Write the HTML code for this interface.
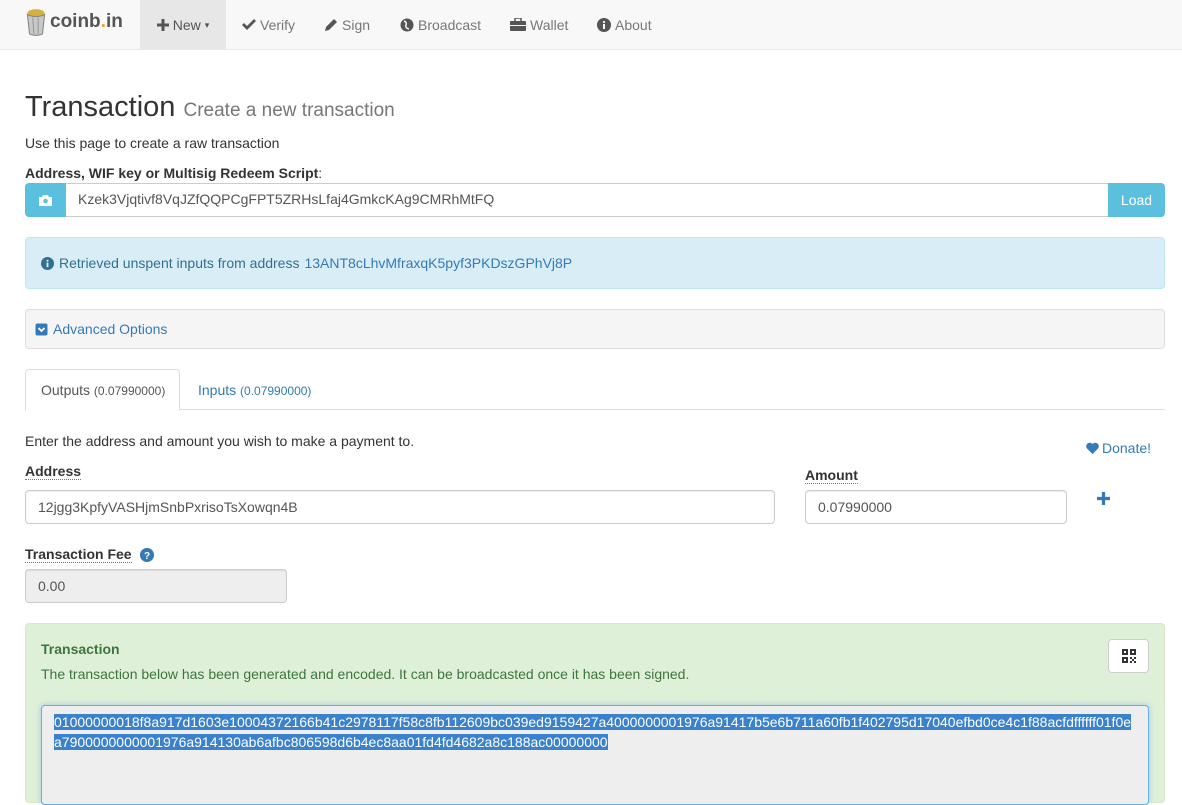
<!DOCTYPE html>
<html><head><meta charset="utf-8">
<style>
*{box-sizing:border-box}
body{margin:0;width:1182px;height:786px;overflow:hidden;font-family:"Liberation Sans",sans-serif;font-size:14px;color:#333;background:#fff}
a{color:#337ab7;text-decoration:none}
.nav{height:50px;background:#f8f8f8;border-bottom:1px solid #e7e7e7;position:relative}
.nav .brand{position:absolute;left:25px;top:8px;font-size:19px;font-weight:bold;color:#555;display:flex;align-items:center}
.nav .item{position:absolute;top:0;height:49px;line-height:48px;color:#777;font-size:14px;display:flex;align-items:center;gap:4px}
.nav .item svg{fill:#555}
.ta{position:absolute;white-space:nowrap}
h1{position:absolute;left:25px;top:91px;margin:0;font-size:29px;font-weight:normal;color:#333;white-space:nowrap}
h1 small{font-size:19px;color:#777}
.lbl{font-weight:bold;position:absolute;white-space:nowrap}
.dot{border-bottom:1px dotted #777}
.inp{position:absolute;height:34px;border:1px solid #ccc;border-radius:4px;padding:6px 12px;font-size:14px;color:#555;line-height:20px;background:#fff;box-shadow:inset 0 1px 1px rgba(0,0,0,.075)}
</style></head><body>
<div class="nav">
 <div class="brand"><svg width="22" height="28" viewBox="0 0 20 26"><ellipse cx="10" cy="5" rx="8" ry="4" fill="#d4b23a"/><path d="M2 6 L4 24 Q10 27 16 24 L18 6 Q10 10 2 6Z" fill="#c8c8c8" stroke="#888"/><path d="M7 9 L8 24 M12 9 L12 24" stroke="#999"/></svg><span style="margin-left:3px">coinb<span style="color:#e3a72f">.</span>in</span></div>
 <div class="item" style="left:140px;width:86px;background:#e7e7e7;color:#555;justify-content:center"><svg width="12" height="12" viewBox="0 0 12 12"><path d="M4.5 0h3v4.5H12v3H7.5V12h-3V7.5H0v-3h4.5z"/></svg>New<span style="font-size:9px">▾</span></div>
 <div class="item" style="left:242px"><svg width="14" height="12" viewBox="0 0 14 12"><path d="M0 6l2-2 3 3 7-7 2 2-9 9z"/></svg>Verify</div>
 <div class="item" style="left:324px"><svg width="14" height="14" viewBox="0 0 14 14"><path d="M10 1l3 3-8 8-4 1 1-4z"/></svg>Sign</div>
 <div class="item" style="left:400px"><svg width="14" height="14" viewBox="0 0 14 14"><circle cx="7" cy="7" r="6.5"/><path d="M4 3q3 1 2 4t3 4" stroke="#f8f8f8" fill="none" stroke-width="1.5"/></svg>Broadcast</div>
 <div class="item" style="left:510px"><svg width="16" height="13" viewBox="0 0 16 13"><rect x="0" y="3" width="16" height="10" rx="1"/><rect x="5" y="0" width="6" height="4" fill="none" stroke="#555" stroke-width="1.5"/><rect x="0" y="7" width="16" height="1" fill="#f8f8f8"/></svg>Wallet</div>
 <div class="item" style="left:597px"><svg width="14" height="14" viewBox="0 0 14 14"><circle cx="7" cy="7" r="7"/><rect x="6" y="6" width="2" height="5" fill="#f8f8f8"/><circle cx="7" cy="4" r="1.1" fill="#f8f8f8"/></svg>About</div>
</div>
<h1>Transaction <small>Create a new transaction</small></h1>
<div class="ta" style="left:25px;top:135px">Use this page to create a raw transaction</div>
<div class="lbl" style="left:25px;top:165px">Address, WIF key or Multisig Redeem Script<span style="font-weight:normal">:</span></div>
<div class="ta" style="left:25px;top:183px;width:1140px;height:34px;display:flex">
 <div style="width:41px;background:#5bc0de;border-radius:4px 0 0 4px;display:flex;align-items:center;justify-content:center"><svg width="13" height="11" viewBox="0 0 13 11"><path d="M0 2h3l1-2h5l1 2h3v9H0z" fill="#fff"/><circle cx="6.5" cy="6" r="2.3" fill="#5bc0de"/></svg></div>
 <div style="flex:1;border:1px solid #ccc;border-left:0;border-right:0;padding:7px 12px;color:#555">Kzek3Vjqtivf8VqJZfQQPCgFPT5ZRHsLfaj4GmkcKAg9CMRhMtFQ</div>
 <div style="width:57px;background:#5bc0de;color:#fff;border-radius:0 4px 4px 0;text-align:center;line-height:34px">Load</div>
</div>
<div class="ta" style="left:25px;top:237px;width:1140px;height:52px;background:#d9edf7;border:1px solid #bce8f1;border-radius:4px;padding:17px 15px;color:#31708f;display:flex;align-items:center;gap:5px"><svg width="13" height="13" viewBox="0 0 14 14"><circle cx="7" cy="7" r="7" fill="#31708f"/><rect x="6" y="6" width="2" height="5" fill="#d9edf7"/><circle cx="7" cy="4" r="1.1" fill="#d9edf7"/></svg>Retrieved unspent inputs from address <a href="#" style="color:#337ab7">13ANT8cLhvMfraxqK5pyf3PKDszGPhVj8P</a></div>
<div class="ta" style="left:25px;top:309px;width:1140px;height:40px;background:#f5f5f5;border:1px solid #ddd;border-radius:4px;padding:10px 9px;display:flex;align-items:center;gap:5px"><svg width="13" height="13" viewBox="0 0 13 13"><rect x="0.5" y="0.5" width="12" height="12" rx="2" fill="#337ab7"/><path d="M3.5 5l3 3 3-3" stroke="#fff" stroke-width="1.8" fill="none"/></svg><a href="#">Advanced Options</a></div>
<div class="ta" style="left:25px;top:409px;width:1140px;border-top:1px solid #ddd"></div>
<div class="ta" style="left:25px;top:369px;width:155px;height:42px;border:1px solid #ddd;border-bottom-color:#fff;border-radius:4px 4px 0 0;background:#fff;padding:12px 0 0 15px;color:#555">Outputs <span style="font-size:12px">(0.07990000)</span></div>
<div class="ta" style="left:198px;top:382px;color:#337ab7">Inputs <span style="font-size:12px">(0.07990000)</span></div>
<div class="ta" style="left:25px;top:433px">Enter the address and amount you wish to make a payment to.</div>
<div class="ta" style="left:1086px;top:440px;color:#337ab7;display:flex;align-items:center;gap:3px"><svg width="13" height="12" viewBox="0 0 13 12"><path d="M6.5 12L1 6.5A3 3 0 0 1 6.5 2 3 3 0 0 1 12 6.5z" fill="#337ab7"/></svg>Donate!</div>
<div class="lbl" style="left:25px;top:463px"><span class="dot">Address</span></div>
<div class="lbl" style="left:805px;top:467px"><span class="dot">Amount</span></div>
<div class="inp" style="left:25px;top:490px;width:750px">12jgg3KpfyVASHjmSnbPxrisoTsXowqn4B</div>
<div class="inp" style="left:805px;top:490px;width:262px">0.07990000</div>
<div class="ta" style="left:1097px;top:492px"><svg width="13" height="13" viewBox="0 0 12 12"><path d="M4.5 0h3v4.5H12v3H7.5V12h-3V7.5H0v-3h4.5z" fill="#337ab7"/></svg></div>
<div class="lbl" style="left:25px;top:546px;display:flex;align-items:center;gap:8px"><span class="dot">Transaction Fee</span><svg width="14" height="14" viewBox="0 0 14 14"><circle cx="7" cy="7" r="7" fill="#337ab7"/><text x="7" y="11" font-size="10" font-weight="bold" text-anchor="middle" fill="#fff" font-family="Liberation Sans">?</text></svg></div>
<div class="inp" style="left:25px;top:569px;width:262px;background:#eee">0.00</div>
<div class="ta" style="left:25px;top:623px;width:1140px;height:180px;background:#dff0d8;border:1px solid #d6e9c6;border-radius:4px;color:#3c763d">
 <div style="position:absolute;left:15px;top:17px;font-weight:bold">Transaction</div>
 <div style="position:absolute;left:15px;top:42px">The transaction below has been generated and encoded. It can be broadcasted once it has been signed.</div>
 <div style="position:absolute;left:1082px;top:15px;width:41px;height:34px;background:#fff;border:1px solid #ccc;border-radius:4px;display:flex;align-items:center;justify-content:center"><svg width="14" height="14" viewBox="0 0 14 14" fill="#333"><path d="M0 0h6v6H0zM2 2v2h2V2zM8 0h6v6H8zM10 2v2h2V2zM0 8h6v6H0zM2 10v2h2v-2zM8 8h2v2H8zM12 8h2v2h-2zM10 10h2v2h-2zM8 12h2v2H8zM12 12h2v2h-2z" fill-rule="evenodd"/></svg></div>
 <div style="position:absolute;left:15px;top:81px;width:1108px;height:100px;background:#eee;border:1px solid #66afe9;border-radius:4px;box-shadow:0 0 6px rgba(102,175,233,.6);padding:6px 12px;line-height:20px;color:#fff;word-break:break-all;white-space:normal"><span style="background:#3b82cc">01000000018f8a917d1603e10004372166b41c2978117f58c8fb112609bc039ed9159427a4000000001976a91417b5e6b711a60fb1f402795d17040efbd0ce4c1f88acfdffffff01f0ea7900000000001976a914130ab6afbc806598d6b4ec8aa01fd4fd4682a8c188ac00000000</span></div>
</div>
</body></html>
